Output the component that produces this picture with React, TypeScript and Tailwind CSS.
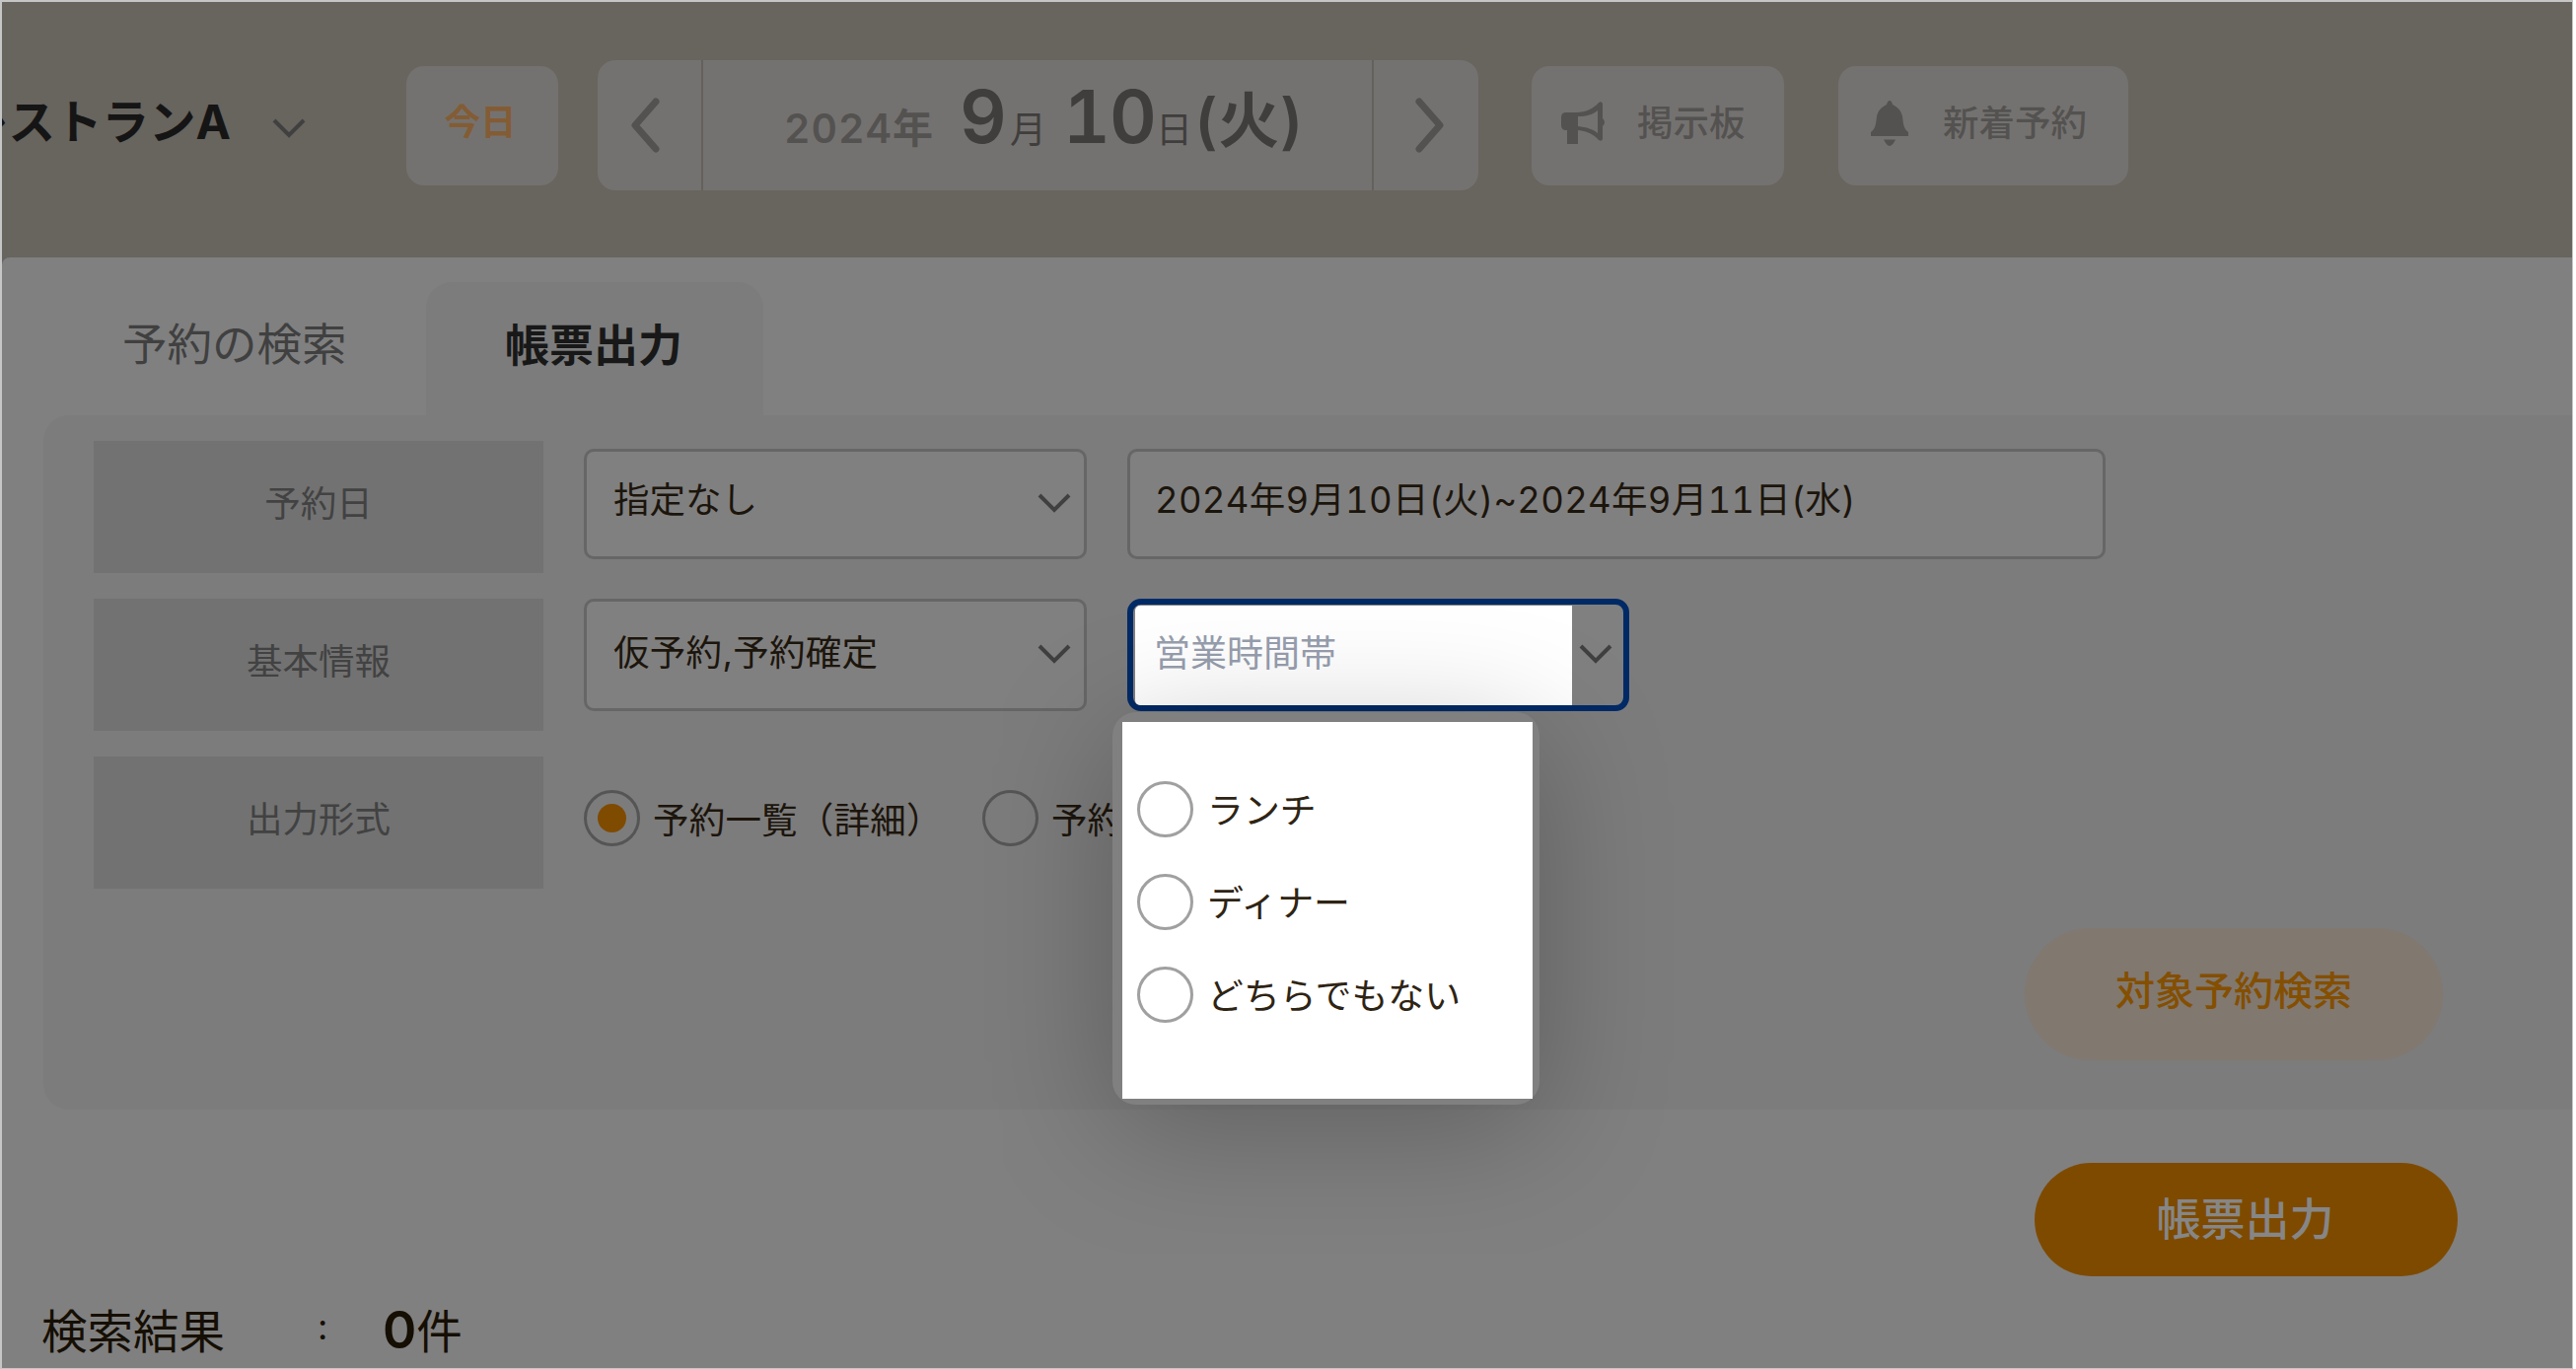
import React from "react";

const periods = ["ランチ", "ディナー", "どちらでもない"];

const Chevron = ({ className = "" }: { className?: string }) => (
    <svg viewBox="0 0 34 20" className={`w-[34px] h-5 shrink-0 ${className}`} fill="none" stroke="#404040" strokeWidth="4">
        <path d="M2 2 L17 17 L32 2" />
    </svg>
);

const Label = ({ children }: { children: React.ReactNode }) => (
    <div className="w-[456px] h-[134px] shrink-0 flex items-center justify-center pb-[5px] bg-[#727272] text-[#424242]">
        {children}
    </div>
);

const Radio = ({ checked = false }: { checked?: boolean }) => (
    <span className="w-[57px] h-[57px] shrink-0 rounded-full border-[3px] border-[#555555] flex items-center justify-center">
        {checked && <span className="w-[29px] h-[29px] rounded-full bg-[#7f4b00]"></span>}
    </span>
);

const Header = () => (
    <div className="h-[259px] shrink-0 flex items-start overflow-hidden bg-[#68645e] text-[#545250]">
        {/* Restaurant name, cut off on the left */}
        <div className="w-[410px] h-full shrink-0 flex items-start relative">
            <p className="-ml-[41px] mt-[88px] text-[47.5px] leading-[68px] font-bold text-[#151515] whitespace-nowrap">レストランA</p>
            <Chevron className="absolute left-[274px] top-[118px]" />
        </div>

        {/* Today */}
        <div className="w-[154px] h-[121px] mt-[65px] shrink-0 rounded-[18px] bg-[#747270] flex items-center justify-center pb-[5px] pr-[4px] text-[36.5px] font-bold text-[#835c34]">
            今日
        </div>

        {/* Date switcher */}
        <div className="w-[893px] h-[132px] mt-[59px] ml-[40px] shrink-0 rounded-[18px] bg-[#747270] flex">
            <div className="w-[107px] border-r-2 border-[#64615c] flex items-center justify-center pr-[10px]">
                <svg viewBox="0 0 30 56" className="w-[30px] h-14" fill="none" stroke="#545250" strokeWidth="7" strokeLinecap="round" strokeLinejoin="round">
                    <path d="M26 4 L5 28 L26 52" />
                </svg>
            </div>
            <div className="w-[680px] border-r-2 border-[#64615c] flex items-baseline pl-[82px] whitespace-nowrap leading-[115px] tabular-nums">
                <span className="w-[178px] text-[41px] font-semibold tracking-[1px]">2024年</span>
                <span className="w-[51px] text-[74px] font-semibold text-[#403e3c]">9</span>
                <span className="w-[54px] text-[37px] text-[#403e3c]">月</span>
                <span className="w-[94px] text-[74px] font-semibold text-[#403e3c] tracking-[-1px]">10</span>
                <span className="w-[39px] text-[37px] text-[#403e3c]">日</span>
                <span className="text-[62px] font-semibold text-[#403e3c]">(火)</span>
            </div>
            <div className="w-[106px] flex items-center justify-center">
                <svg viewBox="0 0 30 56" className="w-[30px] h-14 ml-[8px]" fill="none" stroke="#545250" strokeWidth="7" strokeLinecap="round" strokeLinejoin="round">
                    <path d="M4 4 L25 28 L4 52" />
                </svg>
            </div>
        </div>

        {/* Board */}
        <div className="w-[256px] h-[121px] mt-[65px] ml-[54px] shrink-0 rounded-[18px] bg-[#747270] flex items-center pl-[30px] pb-[4px] text-[36.5px] font-medium">
            <svg viewBox="0 0 44 44" className="w-11 h-11 mr-[33px] -mt-[2px]" fill="#545250">
                <path d="M5 11 H15 C25 11 33 7 38 1 Q41 -1 42 2 V17 Q44 19 44 21 Q44 23 42 25 V38 Q41 41 38 39 C34 34 27 30 17 29 V43 H6 V29 H5 Q0 29 0 24 V16 Q0 11 5 11 Z M17 15 V25 C26 26 32 28 37 32 V9 C32 13 26 15 17 15 Z" fillRule="evenodd" />
            </svg>
            掲示板
        </div>

        {/* New reservations */}
        <div className="w-[294px] h-[121px] mt-[65px] ml-[55px] shrink-0 rounded-[18px] bg-[#747270] flex items-center pl-[33px] pb-[4px] text-[36.5px] font-medium">
            <svg viewBox="0 0 38 46" className="w-[38px] h-[46px] mr-[35px] -mt-[2px]" fill="#545250">
                <path d="M19 0 Q21 0 22 4 C28 7 31 11 32 16 C33 24 33 28 38 32 V36 H0 V32 C5 28 5 24 6 16 C7 11 10 7 16 4 Q17 0 19 0 Z M13 39.500 H25 Q22 46 19 46 Q16 46 13 39.500 Z" />
            </svg>
            新着予約
        </div>
    </div>
);

export default function App() {
    return (
        <div className="w-[2612px] h-[1388px] overflow-hidden bg-white pr-[3px] font-['Inter','Noto_Sans_CJK_JP',sans-serif] text-[36.5px] leading-[1.4] text-[#1c150c]">
            <div className="h-full flex flex-col overflow-hidden border-t-2 border-l-2 border-r border-b border-[#c6c6c6] bg-[#68645e]">
                <Header />

                <div className="flex-1 flex flex-col bg-[#808080] rounded-tl-[8px]">
                    {/* Tabs */}
                    <div className="h-[160px] shrink-0 flex items-end text-[44.5px]">
                        <div className="w-[430px] h-[135px] flex items-center pl-[122px] pb-[7px] text-[45.5px] text-[#404040]">予約の検索</div>
                        <div className="w-[342px] h-[135px] flex items-center justify-center pb-[7px] pr-[2px] rounded-t-[26px] bg-[#7c7c7c] text-[45px] font-bold text-[#181818]">帳票出力</div>
                    </div>

                    {/* Search form */}
                    <div className="h-[704px] shrink-0 ml-[42px] pl-[51px] pt-[26px] rounded-l-[26px] bg-[#7c7c7c] flex flex-col gap-[26px]">
                        <div className="flex">
                            <Label>予約日</Label>
                            <div className="w-[510px] h-[112px] mt-[8px] ml-[41px] pl-[27px] pr-[13px] pb-[6px] rounded-[10px] border-[3px] border-[#666666] bg-[#808080] flex items-center justify-between">
                                指定なし
                                <Chevron className="mt-[4px]" />
                            </div>
                            <div className="w-[992px] h-[112px] mt-[8px] ml-[41px] pl-[25px] pb-[6px] rounded-[10px] border-[3px] border-[#666666] bg-[#808080] flex items-center whitespace-nowrap tabular-nums tracking-[0.25px]">
                                2024年9月10日(火)~2024年9月11日(水)
                            </div>
                        </div>

                        <div className="flex">
                            <Label>基本情報</Label>
                            <div className="w-[510px] h-[114px] ml-[41px] pl-[27px] pr-[13px] pb-[3px] rounded-[10px] border-[3px] border-[#666666] bg-[#808080] flex items-center justify-between">
                                <span className="tracking-[0.3px]">仮予約,予約確定</span>
                                <Chevron />
                            </div>

                            {/* Open select and its list */}
                            <div className="relative w-[509px] h-[114px] ml-[41px] rounded-[14px] border-[6px] border-[#002a66] bg-[#808080] flex items-center">
                                <div className="w-[443px] h-[101px] ml-[2px] pl-[19px] pb-[3px] rounded-l-[5px] flex items-center bg-white text-[37px] text-[#979eae]">
                                    営業時間帯
                                </div>
                                <Chevron className="ml-[7px] -mt-[3px]" />

                                <div className="absolute z-10 left-[-21px] top-[109px] w-[433px] h-[398px] rounded-[24px] bg-[#808080] pl-[10px] pt-[10px] shadow-[0_25px_130px_rgba(0,0,0,0.25)]">
                                    <div className="w-[416px] h-[382px] bg-white pl-[15px] pt-[60px] flex flex-col gap-[37px] text-[36.9px] text-[#2e2414]">
                                        {periods.map((period) => (
                                            <div key={period} className="flex items-center h-[57px]">
                                                <span className="w-[57px] h-[57px] rounded-full border-[3px] border-[#a0a0a0] mr-[14px]"></span>
                                                <span className="mt-[3px]">{period}</span>
                                            </div>
                                        ))}
                                    </div>
                                </div>
                            </div>
                        </div>

                        <div className="flex">
                            <Label>出力形式</Label>
                            <div className="h-[57px] mt-[34px] ml-[41px] flex items-center whitespace-nowrap">
                                <Radio checked />
                                <span className="w-[334px] ml-[13px] mt-[7px] tracking-[0.2px]">予約一覧（詳細）</span>
                                <Radio />
                                <span className="ml-[13px] mt-[7px]">予約</span>
                            </div>
                        </div>

                        <div className="w-[424px] h-[134px] ml-[1958px] mt-[14px] rounded-full bg-[#817870] flex items-center justify-center pb-[6px] text-[40px] font-medium text-[#844f00]">
                            対象予約検索
                        </div>
                    </div>

                    <div className="w-[429px] h-[115px] shrink-0 mt-[54px] ml-[2061px] pr-[2px] rounded-full bg-[#7e4a00] flex items-center justify-center text-[45px] font-medium text-[#868686]">
                        帳票出力
                    </div>

                    {/* Result count */}
                    <div className="flex items-baseline mt-[20px] pl-[40px] text-[46.5px] leading-[70px] text-[#150e03]">
                        <span className="w-[280px]">検索結果</span>
                        <span className="w-[66px] relative -top-[9px] text-[36px]">:</span>
                        <span className="text-[52px] font-semibold">0</span>
                        <span>件</span>
                    </div>
                </div>
            </div>
        </div>
    );
}
